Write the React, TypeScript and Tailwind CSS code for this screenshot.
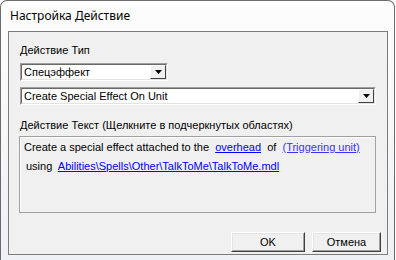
import React from "react";

const ui = { fontFamily: '"Liberation Sans", Arial, sans-serif' };

function DropArrow() {
  return (
    <div className="flex h-full w-[16px] shrink-0 items-center justify-center border border-t-white border-l-white border-b-[#404040] border-r-[#404040] bg-[#f0f0f0]">
      <svg width="7" height="4" viewBox="0 0 7 4" aria-hidden>
        <path d="M0 0h7L3.5 4z" fill="#000" />
      </svg>
    </div>
  );
}

function Combo({ value, width }: { value: string; width: string }) {
  return (
    <div className={`${width} h-[18px] border border-t-[#a0a0a0] border-l-[#a0a0a0] border-b-white border-r-white`}>
      <div className="flex h-full items-stretch border border-t-[#696969] border-l-[#696969] border-b-[#e3e3e3] border-r-[#e3e3e3] bg-white">
        <span className="flex-1 pl-[2px] text-[11px] leading-[14px] text-black">{value}</span>
        <DropArrow />
      </div>
    </div>
  );
}

function Btn({ label, width }: { label: string; width: string }) {
  return (
    <div className={`${width} h-[20px] border border-t-white border-l-white border-b-[#404040] border-r-[#404040]`}>
      <div className="flex h-full items-center justify-center border border-t-[#e3e3e3] border-l-[#e3e3e3] border-b-[#a0a0a0] border-r-[#a0a0a0] bg-[#f0f0f0] text-[11px] text-black">
        {label}
      </div>
    </div>
  );
}

function Link({ children, className = "text-[#0000ff]" }: { children: React.ReactNode; className?: string }) {
  return <span className={`underline ${className}`}>{children}</span>;
}

export default function App() {
  return (
    <div className="h-[260px] w-[396px] overflow-hidden bg-white" style={ui}>
      <div className="flex h-[260px] w-[395px] flex-col rounded-t-[7px] border border-b-0 border-[#6b6b6b] bg-gradient-to-b from-[#fdfdfd] to-[#eef2f5]">
        {/* Title */}
        <div
          className="flex h-[30px] items-center pl-[9px] text-[12px] text-black"
          style={{ fontFamily: '"Noto Sans", "Liberation Sans", sans-serif' }}
        >
          Настройка Действие
        </div>

        {/* Client area */}
        <div className="ml-[7px] mr-[6px] flex h-[224px] flex-col border border-[#7c7c7c] bg-[#f0f0f0] pl-[11px] pr-[11px] pt-[11px]">
          <div className="text-[11px] leading-[14px] text-black">Действие Тип</div>
          <div className="mt-[6px]">
            <Combo value="Спецэффект" width="w-[148px]" />
          </div>
          <div className="mt-[6px]">
            <Combo value="Create Special Effect On Unit" width="w-[356px]" />
          </div>
          <div className="mt-[13px] text-[11px] leading-[14px] text-black">
            Действие Текст (Щелкните в подчеркнутых областях)
          </div>
          <div className="-ml-[1px] mt-[4px] h-[77px] w-[357px] border border-[#a0a0a0] pl-[4px] pt-[4px] text-[11px] text-black shadow-[inset_1px_1px_0_#ffffff]">
            <div className="whitespace-pre leading-[13px]">
              Create a special effect attached to the  <Link>overhead</Link>  of  <Link className="text-[#3a32ff]">(Triggering unit)</Link>
            </div>
            <div className="mt-[6px] whitespace-pre pl-[2px] leading-[13px]">
              using  <Link>Abilities\Spells\Other\TalkToMe\TalkToMe.mdl</Link>
            </div>
          </div>
          <div className="-mr-[5px] mt-[19px] flex justify-end gap-[7px]">
            <Btn label="OK" width="w-[74px]" />
            <Btn label="Отмена" width="w-[69px]" />
          </div>
        </div>
        <div className="flex-1" />
      </div>
    </div>
  );
}
